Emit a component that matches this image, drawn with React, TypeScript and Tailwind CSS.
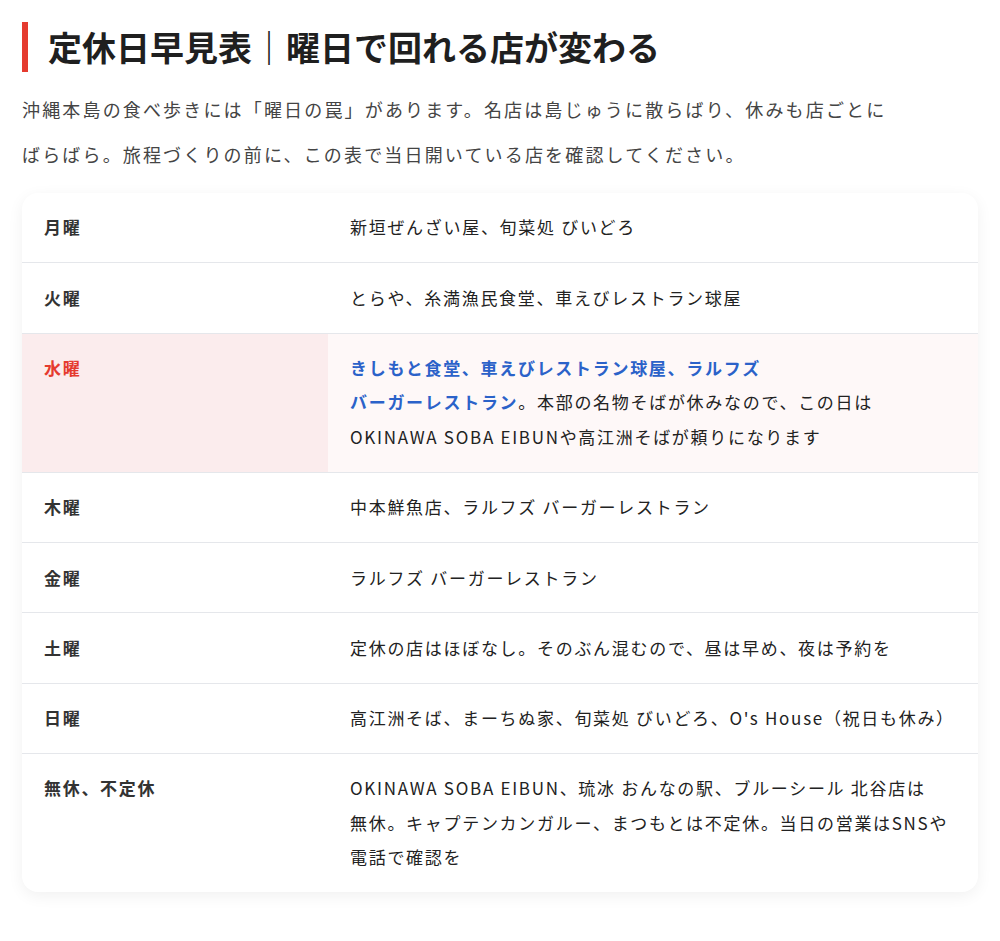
import React from "react";

const rows: { day: string; content: React.ReactNode; hl?: boolean }[] = [
  { day: "月曜", content: "新垣ぜんざい屋、旬菜処 びいどろ" },
  { day: "火曜", content: "とらや、糸満漁民食堂、車えびレストラン球屋" },
  {
    day: "水曜",
    hl: true,
    content: (
      <>
        <span className="font-bold text-[#2b62c9]">
          きしもと食堂、車えびレストラン球屋、ラルフズ
          <br />
          バーガーレストラン
        </span>
        。本部の名物そばが休みなので、この日は
        <br />
        OKINAWA SOBA EIBUNや高江洲そばが頼りになります
      </>
    ),
  },
  { day: "木曜", content: "中本鮮魚店、ラルフズ バーガーレストラン" },
  { day: "金曜", content: "ラルフズ バーガーレストラン" },
  { day: "土曜", content: "定休の店はほぼなし。そのぶん混むので、昼は早め、夜は予約を" },
  { day: "日曜", content: "高江洲そば、まーちぬ家、旬菜処 びいどろ、O's House（祝日も休み）" },
  {
    day: "無休、不定休",
    content: (
      <>
        OKINAWA SOBA EIBUN、琉冰 おんなの駅、ブルーシール 北谷店は
        <br />
        無休。キャプテンカンガルー、まつもとは不定休。当日の営業はSNSや
        <br />
        電話で確認を
      </>
    ),
  },
];

export default function App() {
  return (
    <div
      className="min-h-[941px] bg-white px-[22px] pt-[22px]"
      style={{ fontFamily: '"Noto Sans CJK JP", "Noto Sans", sans-serif' }}
    >
      <h2 className="flex items-center border-l-[6px] border-[#e53b2f] pl-[20px] text-[34px] font-bold leading-[50px] text-[#1f1f1f]">
        定休日早見表｜曜日で回れる店が変わる
      </h2>
      <p className="mt-[15px] max-w-[880px] text-[18px] leading-[45px] tracking-[0.12em] text-[#444]">
        沖縄本島の食べ歩きには「曜日の罠」があります。名店は島じゅうに散らばり、休みも店ごとにばらばら。旅程づくりの前に、この表で当日開いている店を確認してください。
      </p>
      <div className="mt-[16px] overflow-hidden rounded-[16px] bg-white shadow-[0_4px_16px_rgba(0,0,0,0.06)]">
        {rows.map((r, i) => (
          <div
            key={r.day}
            className={`grid grid-cols-[306px_1fr] ${i > 0 ? "border-t border-[#e5e7eb]" : ""}`}
          >
            <div
              className={`px-[22px] py-[17.4px] text-[17px] font-bold leading-[34.5px] tracking-[0.1em] ${
                r.hl ? "bg-[#fbeced] text-[#e53b2f]" : "text-[#333]"
              }`}
            >
              {r.day}
            </div>
            <div
              className={`px-[22px] py-[17.4px] text-[17px] leading-[34.5px] tracking-[0.1em] text-[#222] ${
                r.hl ? "bg-[#fef8f8]" : ""
              }`}
            >
              {r.content}
            </div>
          </div>
        ))}
      </div>
    </div>
  );
}
